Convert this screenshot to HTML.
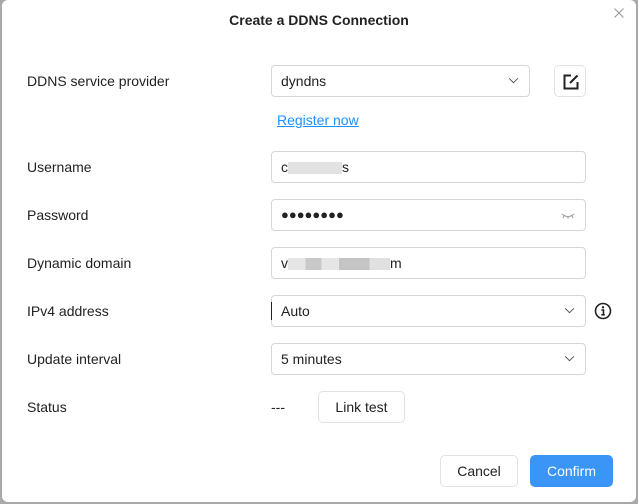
<!DOCTYPE html>
<html><head><style>
html,body{margin:0;padding:0;width:638px;height:504px;overflow:hidden;background:#a9a9a9;font-family:"Liberation Sans",sans-serif;}
.dlg{position:absolute;left:2px;top:0;width:634px;height:502px;background:#fff;border-radius:6px;}
.t{position:absolute;left:0;width:638px;top:12px;text-align:center;font-size:14px;font-weight:bold;color:#222;}
.lbl{position:absolute;left:27px;font-size:14px;color:#222;}
.in{position:absolute;left:271px;width:313px;height:30px;border:1px solid #d4d6da;border-radius:4px;box-sizing:content-box;font-size:14px;color:#222;line-height:30px;}
.in span.v{position:absolute;left:9px;top:0;}
.chev{position:absolute;right:10px;top:11px;width:11px;height:7px;}
.btn{position:absolute;border:1px solid #e0e2e5;border-radius:5px;background:#fff;font-size:14px;color:#222;text-align:center;box-sizing:border-box;}
.blur{position:absolute;height:12px;top:10px;}
</style></head><body>
<div class="dlg"></div>
<div class="t">Create a DDNS Connection</div>
<svg width="10" height="10" viewBox="0 0 10 10" style="position:absolute;left:614px;top:8px"><path d="M0.5 0.5L9.5 9.5M9.5 0.5L0.5 9.5" stroke="#999" stroke-width="1.1"/></svg>

<div class="lbl" style="top:73px">DDNS service provider</div>
<div class="in" style="top:65px;width:257px"><span class="v">dyndns</span><svg class="chev" viewBox="0 0 12 8"><path d="M1 1.5L6 6.5L11 1.5" fill="none" stroke="#555" stroke-width="1.2"/></svg></div>
<div class="btn" style="left:554px;top:65px;width:32px;height:32px;"><svg width="16" height="16" viewBox="0 0 16 16" style="position:absolute;left:8px;top:8px"><path d="M8 1.5H1.5V14.5H14.5V8" fill="none" stroke="#222" stroke-width="2"/><path d="M7 9L14.5 1.5" stroke="#222" stroke-width="2"/></svg></div>
<div style="position:absolute;left:277px;top:112px;font-size:14px;color:#1e90ff;text-decoration:underline">Register now</div>

<div class="lbl" style="top:159px">Username</div>
<div class="in" style="top:151px"><span class="v">c</span><div class="blur" style="left:16px;width:54px;background:#e2e2e2"></div><span class="v" style="left:70px">s</span></div>

<div class="lbl" style="top:207px">Password</div>
<div class="in" style="top:199px"><span class="v" style="font-size:13px">●●●●●●●●</span><svg width="14" height="6" viewBox="0 0 14 6" style="position:absolute;right:10px;top:13px"><path d="M1 1Q7 6 13 1M3 3L2 5M7 4V6M11 3L12 5" fill="none" stroke="#999" stroke-width="1"/></svg></div>

<div class="lbl" style="top:255px">Dynamic domain</div>
<div class="in" style="top:247px"><span class="v">v</span><div class="blur" style="left:16px;width:102px;background:linear-gradient(90deg,#e6e6e6 0 17%,#c8c8c8 17% 33%,#e6e6e6 33% 50%,#c4c4c4 50% 80%,#e0e0e0 80%)"></div><span class="v" style="left:118px">m</span></div>

<div class="lbl" style="top:303px">IPv4 address</div>
<div class="in" style="top:295px"><div style="position:absolute;left:-1px;top:6px;width:1px;height:18px;background:#222"></div><span class="v">Auto</span><svg class="chev" viewBox="0 0 12 8"><path d="M1 1.5L6 6.5L11 1.5" fill="none" stroke="#555" stroke-width="1.2"/></svg></div>
<svg width="18" height="18" viewBox="0 0 18 18" style="position:absolute;left:594px;top:302px"><circle cx="9" cy="9" r="7.5" fill="none" stroke="#222" stroke-width="1.6"/><circle cx="9" cy="5.3" r="1.2" fill="#222"/><path d="M7.3 8H9.5V12.5M7.3 12.8H10.8" fill="none" stroke="#222" stroke-width="1.6"/></svg>

<div class="lbl" style="top:351px">Update interval</div>
<div class="in" style="top:343px"><span class="v">5 minutes</span><svg class="chev" viewBox="0 0 12 8"><path d="M1 1.5L6 6.5L11 1.5" fill="none" stroke="#555" stroke-width="1.2"/></svg></div>

<div class="lbl" style="top:399px">Status</div>
<div style="position:absolute;left:271px;top:399px;font-size:14px;color:#222">---</div>
<div class="btn" style="left:318px;top:391px;width:87px;height:32px;line-height:30px">Link test</div>

<div class="btn" style="left:440px;top:455px;width:78px;height:32px;line-height:30px">Cancel</div>
<div class="btn" style="left:530px;top:455px;width:83px;height:32px;line-height:32px;background:#3a95f7;border:none;color:#fff">Confirm</div>
</body></html>
